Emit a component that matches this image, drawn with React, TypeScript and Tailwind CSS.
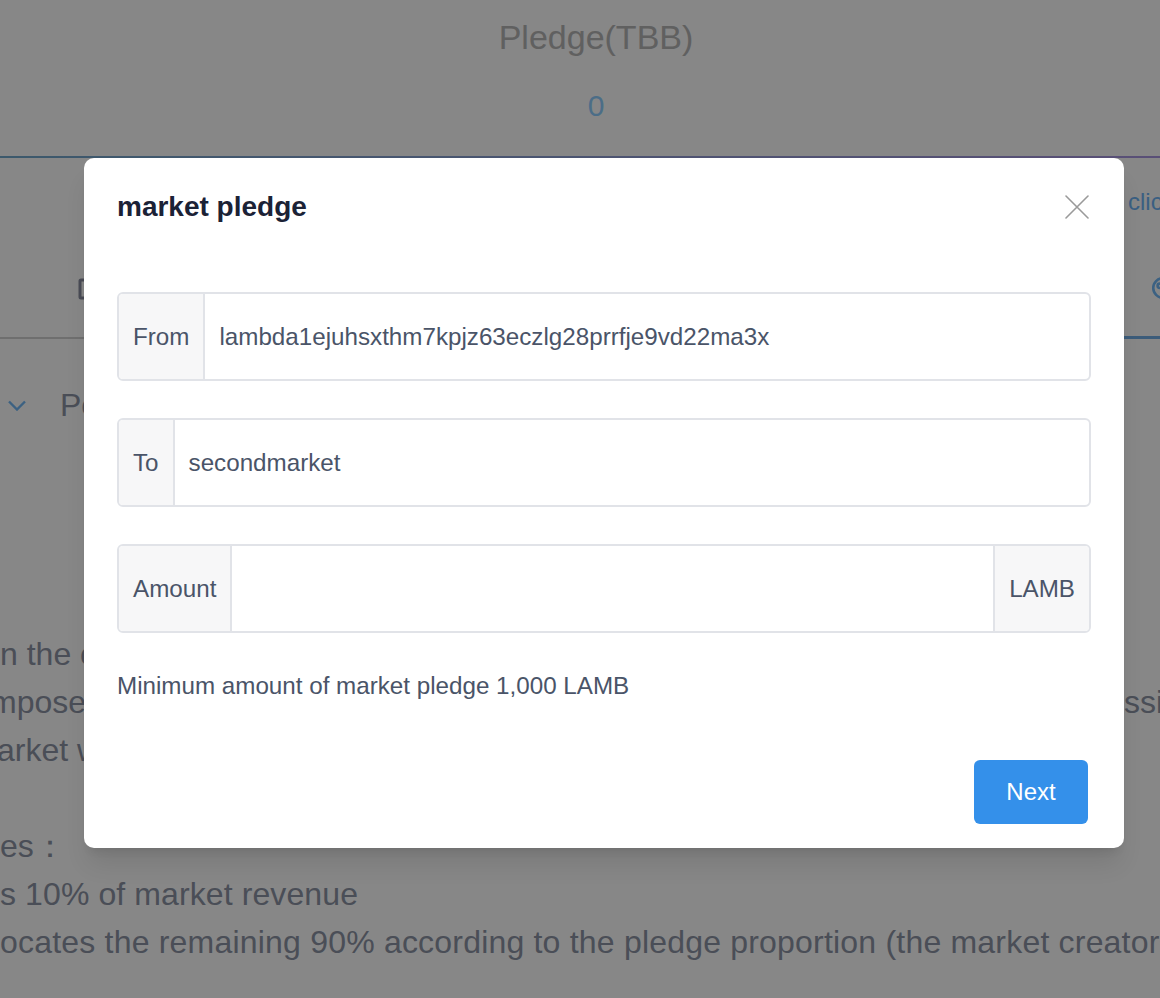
/**
 * Market pledge dialog
 * ====================
 * Modal shown over the pledge page, with the page dimmed behind it.
 */

const fieldText = "text-[24.2px] leading-[30px] text-[#4a5468]";

function Field({
  label,
  value,
  append,
}: {
  label: string;
  value?: string;
  append?: string;
}) {
  return (
    <div className="flex h-[89px] overflow-hidden rounded-md border-2 border-[#e1e3e8]">
      <div className={`flex items-center border-r-2 border-[#e1e3e8] bg-[#f7f7f8] px-[14px] ${fieldText}`}>
        {label}
      </div>
      <div className={`flex flex-1 items-center px-[14px] whitespace-nowrap ${fieldText}`}>
        {value}
      </div>
      {append && (
        <div className={`flex items-center border-l-2 border-[#e1e3e8] bg-[#f7f7f8] px-[14px] ${fieldText}`}>
          {append}
        </div>
      )}
    </div>
  );
}

function Page() {
  const body = "text-[32px] leading-[48px] text-[#8d93a4] whitespace-nowrap";
  return (
    <div className="flex flex-col">
      <div className="flex h-[156px] flex-col items-center pl-[32px] pt-[16px]">
        <div className="text-[34px] leading-[42px] text-[#b5b5b5]">Pledge(TBB)</div>
        <div className="mt-[29px] text-[30px] leading-[38px] text-[#8fcfff]">0</div>
      </div>
      <div className="h-[2px] bg-gradient-to-r from-[#71a8cc] to-[#a996e0]" />

      {/* link row */}
      <div className="h-[82px] pl-[1128px] pt-[30px] text-[24px] leading-[28px] whitespace-nowrap text-[#6fb4f5]">
        click here
      </div>

      {/* tabs */}
      <div className="flex h-[99px] border-b-2 border-[#d2d2d2]">
        <div className="flex w-[1124px] shrink-0 items-center gap-3 pl-[78px] text-[28px] text-[#8d93a4]">
          <svg width="24" height="24" viewBox="0 0 24 24" fill="none" stroke="#8a8fa0" strokeWidth="3">
            <rect x="2" y="3" width="18" height="18" rx="1" />
            <path d="M6 8h10M6 13h10" />
          </svg>
          <span>My pledge</span>
        </div>
        <div className="-mb-[2px] flex w-[200px] shrink-0 items-center gap-3 border-b-[3px] border-[#71aee6] pl-[26px] text-[28px] text-[#71b8f5]">
          <svg width="26" height="26" viewBox="0 0 24 24" fill="none" stroke="#71b8f5" strokeWidth="2.4">
            <circle cx="12" cy="12" r="9" />
            <circle cx="9" cy="10" r="2" />
            <circle cx="15" cy="15" r="2" />
          </svg>
          <span>Market</span>
        </div>
      </div>

      {/* collapse header */}
      <div className="mt-[50px] flex h-[32px] items-center">
        <svg className="ml-[7px]" width="20" height="12" viewBox="0 0 20 12" fill="none" stroke="#71b8f5" strokeWidth="2.4">
          <path d="M2 2.5l8 8 8-8" />
        </svg>
        <span className="ml-[33px] text-[32px] leading-[32px] text-[#8d93a4]">Pool rules</span>
      </div>

      {/* rules text */}
      <div className="mt-[209px] flex flex-col">
        <div className={body}>n the creation of a market, the creator pledges LAMB</div>
        <div className="flex">
          <div className={`-ml-[10px] w-[1134px] shrink-0 overflow-hidden ${body}`}>
            mposed of the creator pledge and other users pledge, and the market charges a commi
          </div>
          <div className={body}>ssion</div>
        </div>
        <div className={`-ml-[3px] ${body}`}>arket will be closed</div>
        <div className={body}>&nbsp;</div>
        <div className={body}>es：</div>
        <div className={`tracking-[0.1px] ${body}`}>s 10% of market revenue</div>
        <div className={`tracking-[0.2px] ${body}`}>
          ocates the remaining 90% according to the pledge proportion (the market creator included)
        </div>
      </div>
    </div>
  );
}

function Dialog() {
  return (
    <div className="absolute left-[84px] top-[158px] flex h-[690px] w-[1040px] flex-col rounded-[10px] bg-white shadow-xl">
      <div className="flex items-start justify-between pl-[33px] pr-[35px] pt-[32px]">
        <h2 className="text-[28px] font-bold leading-[34px] text-[#1b2236]">market pledge</h2>
        <button className="mt-[5px]">
          <svg width="24" height="24" viewBox="0 0 24 24" fill="none" stroke="#9a9a9a" strokeWidth="1.6" strokeLinecap="round">
            <path d="M1 1l22 22M23 1L1 23" />
          </svg>
        </button>
      </div>

      <div className="mt-[68px] flex flex-col gap-[37px] px-[33px]">
        <Field label="From" value="lambda1ejuhsxthm7kpjz63eczlg28prrfje9vd22ma3x" />
        <Field label="To" value="secondmarket" />
        <Field label="Amount" append="LAMB" />
      </div>

      <p className="mt-[37px] px-[33px] text-[24.2px] leading-[32px] text-[#4a5468]">
        Minimum amount of market pledge 1,000 LAMB
      </p>

      <div className="mt-auto flex justify-end pb-[24px] pr-[36px]">
        <button className="h-[64px] w-[114px] rounded-md bg-[#3490ea] text-[24px] text-white">
          Next
        </button>
      </div>
    </div>
  );
}

export default function App() {
  return (
    <div className="relative h-[998px] w-[1160px] overflow-hidden bg-white font-['Liberation_Sans',Arial,sans-serif]">
      <Page />
      <div className="absolute inset-0 bg-black/[0.47]" />
      <Dialog />
    </div>
  );
}
